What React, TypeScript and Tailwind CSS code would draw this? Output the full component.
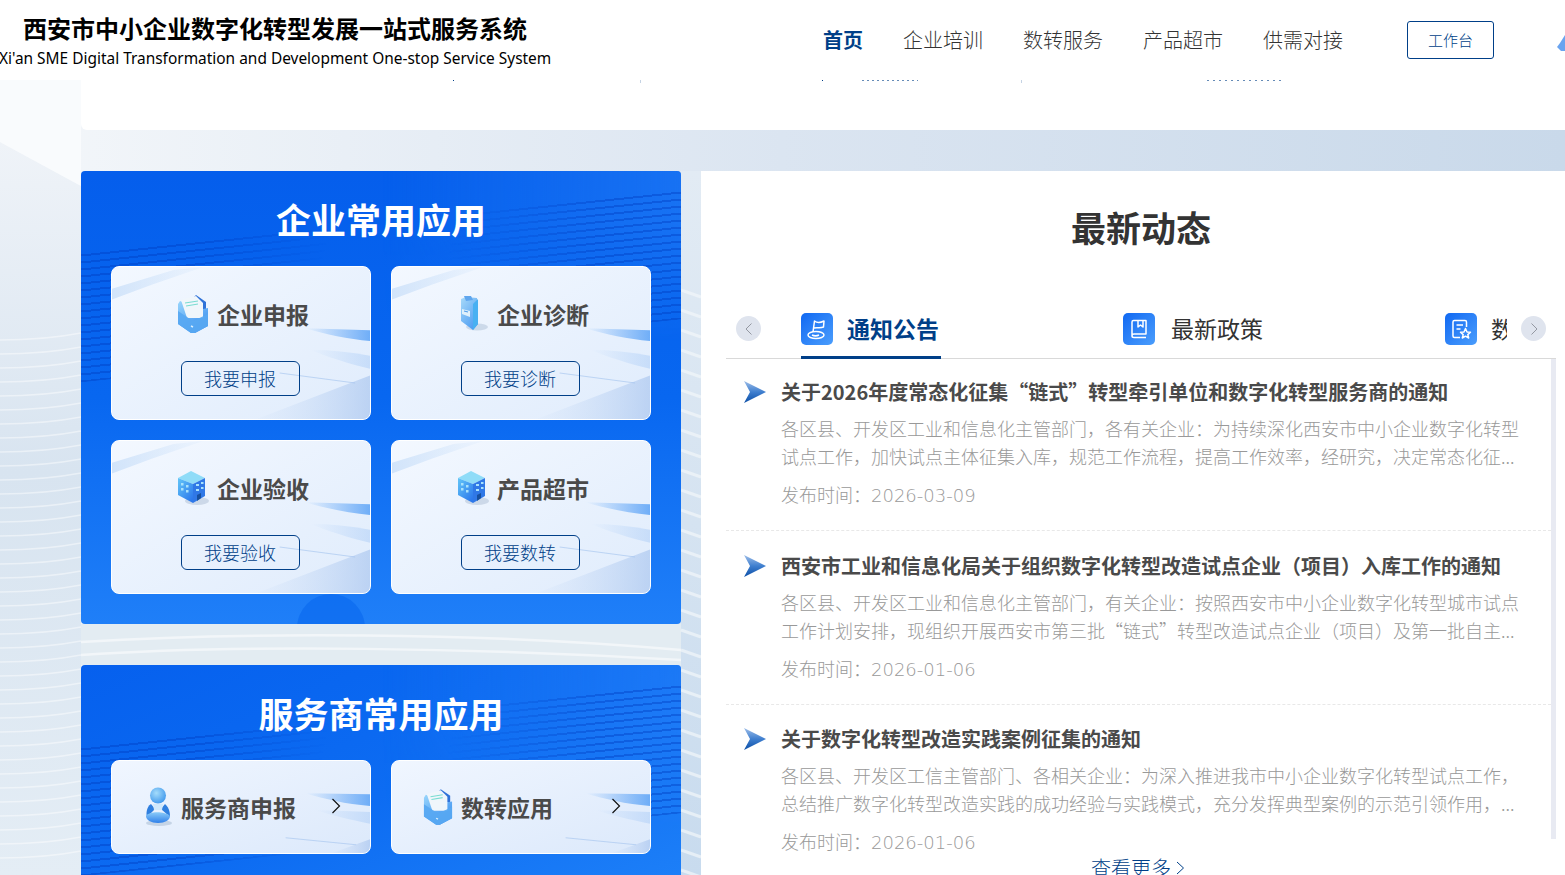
import React from "react";

const CJK = "font-['Noto_Sans_CJK_SC','Noto_Sans',sans-serif]";

function Envelope({ size = 32, id }: { size?: number; id: string }) {
  return (
    <svg width={size} height={Math.round(size * 1.25)} viewBox="0 0 32 40">
      <defs>
        <linearGradient id={id} x1="0" y1="0" x2="0.6" y2="1">
          <stop offset="0" stopColor="#9ad6fc" />
          <stop offset="1" stopColor="#3a8ff0" />
        </linearGradient>
      </defs>
      <path d="M19 1 L29 8 L29 16 L10 10 Z" fill="#2f72d8" />
      <path d="M1 10 L3 7 L26 15 L31 14 L31 32 L18 39 L14 39 L1 30 Z" fill={`url(#${id})`} />
      <path d="M4 6 L19 2 L26 9 L26 24 L10 24 Z" fill="#f0f6fb" />
      <path d="M8 9 L21 7 M9 12 L21 10" stroke="#7adcd2" strokeWidth="1.2" />
      <path d="M1 17 L16 27 L31 20 L31 32 L18 39 L14 39 L1 30 Z" fill="#58a8f2" opacity="0.92" />
      <path d="M14 32 l2 1" stroke="#d8effe" strokeWidth="1.4" />
    </svg>
  );
}

function Clipboard() {
  return (
    <svg width="30" height="36" viewBox="0 0 30 36">
      <defs>
        <linearGradient id="clipg" x1="0" y1="0" x2="0.7" y2="1">
          <stop offset="0" stopColor="#a8daf9" />
          <stop offset="1" stopColor="#4d9cf2" />
        </linearGradient>
      </defs>
      <ellipse cx="19" cy="31" rx="11" ry="3.5" fill="#b8c8dc" opacity="0.6" />
      <path d="M3 3 L8 1 L19 2 L20 28 L15 34 L3 25 Z" fill="url(#clipg)" />
      <path d="M15 8 L20 3 L20 28 L15 34 Z" fill="#48b0f2" />
      <path d="M6 0 L13 0 L15 4 L8 5 Z" fill="#5fa6ee" />
      <path d="M4 13 L12 15 L12 21 L4 18 Z" fill="#dff0fb" />
      <path d="M6 15 L10 16" stroke="#4f9bea" strokeWidth="1.2" />
    </svg>
  );
}

function Building({ id }: { id: string }) {
  return (
    <svg width="32" height="36" viewBox="0 0 32 36">
      <defs>
        <linearGradient id={id} x1="0" y1="0" x2="0.8" y2="1">
          <stop offset="0" stopColor="#63c6f8" />
          <stop offset="1" stopColor="#2c78ec" />
        </linearGradient>
      </defs>
      <ellipse cx="20" cy="31" rx="12" ry="4" fill="#b8c6da" opacity="0.6" />
      <path d="M14 1 L28 8 L16 14 L1 8 Z" fill="#8fdcf8" />
      <path d="M1 8 L16 14 L16 33 L1 25 Z" fill={`url(#${id})`} />
      <path d="M16 14 L28 8 L28 26 L16 33 Z" fill="#3078e6" />
      <g fill="#a9e2fb">
        <rect x="4" y="13" width="2.5" height="2.5" />
        <rect x="9" y="15" width="2.5" height="2.5" />
        <rect x="4" y="18" width="2.5" height="2.5" />
        <rect x="9" y="20" width="2.5" height="2.5" />
        <rect x="19" y="14" width="3" height="2" />
        <rect x="24" y="12" width="2.5" height="2" />
        <rect x="19" y="19" width="3" height="2" />
        <rect x="24" y="17" width="2.5" height="2" />
      </g>
      <path d="M20 25 L24 23 L24 28 L20 31 Z" fill="#17509f" />
    </svg>
  );
}

function Person() {
  return (
    <svg width="30" height="40" viewBox="0 0 30 40">
      <defs>
        <radialGradient id="pg" cx="0.4" cy="0.35" r="0.7">
          <stop offset="0" stopColor="#a4dcfb" />
          <stop offset="1" stopColor="#3f97ec" />
        </radialGradient>
        <linearGradient id="pb" x1="0" y1="0" x2="0" y2="1">
          <stop offset="0" stopColor="#8bcbf8" />
          <stop offset="1" stopColor="#2f80ea" />
        </linearGradient>
      </defs>
      <ellipse cx="16" cy="36" rx="13" ry="3" fill="#b7c7dc" opacity="0.7" />
      <circle cx="15" cy="8.5" r="8" fill="url(#pg)" />
      <path d="M8 17 C3 20 3 28 4 30 L12 22 Z" fill="#2f7fdf" />
      <path d="M22 17 C27 21 27 28 27 30 L18 22 Z" fill="#2f7fdf" />
      <path d="M10 17 L20 17 L19 23 L11 23 Z" fill="#cfe8fb" />
      <path d="M3 29 C6 24 22 24 27 29 C27 33 22 36 15 36 C8 36 3 33 3 29 Z" fill="url(#pb)" />
    </svg>
  );
}

function Gradients() {
  return (
    <svg width="0" height="0" className="absolute">
      <defs>
        <linearGradient id="streak" x1="0" y1="0" x2="1" y2="0">
          <stop offset="0" stopColor="#3d92f5" stopOpacity="0" />
          <stop offset="1" stopColor="#3d92f5" stopOpacity="0.7" />
        </linearGradient>
        <linearGradient id="streak2" x1="0" y1="0" x2="1" y2="0">
          <stop offset="0" stopColor="#9cc3f5" stopOpacity="0" />
          <stop offset="1" stopColor="#9cc3f5" stopOpacity="0.4" />
        </linearGradient>
        <linearGradient id="band" x1="0" y1="0" x2="1" y2="0">
          <stop offset="0" stopColor="#c4dcf8" stopOpacity="0.7" />
          <stop offset="1" stopColor="#c4dcf8" stopOpacity="0.1" />
        </linearGradient>
        <linearGradient id="floor" x1="0" y1="0" x2="1" y2="0">
          <stop offset="0" stopColor="#bdd3f2" stopOpacity="0.05" />
          <stop offset="1" stopColor="#96b8ea" stopOpacity="0.5" />
        </linearGradient>
        <linearGradient id="leftBg" x1="0" y1="0" x2="0" y2="1">
          <stop offset="0" stopColor="#eff3f8" />
          <stop offset="0.45" stopColor="#d8e4f0" />
          <stop offset="1" stopColor="#e4edf5" />
        </linearGradient>
        <linearGradient id="gutterBg" x1="0" y1="0" x2="0" y2="1">
          <stop offset="0" stopColor="#e2ebf4" />
          <stop offset="1" stopColor="#c8dbee" />
        </linearGradient>
        <linearGradient id="na" x1="0" y1="0" x2="0" y2="1">
          <stop offset="0" stopColor="#9dbde8" />
          <stop offset="0.5" stopColor="#3f7fcf" />
          <stop offset="1" stopColor="#0b4ea6" />
        </linearGradient>
      </defs>
    </svg>
  );
}

function CardDecor({ small = false }: { small?: boolean }) {
  return (
    <svg
      className="absolute inset-0 w-full h-full pointer-events-none"
      viewBox={small ? "0 0 260 94" : "0 0 260 154"}
      preserveAspectRatio="none"
    >
      {small ? (
        <>
          <path d="M195 33 L260 34 L260 46 C235 44 215 39 195 33 Z" fill="url(#streak)" />
          <path d="M205 50 L260 52 L260 64 C240 60 220 55 205 50 Z" fill="url(#streak2)" />
          <path d="M175 78 L246 85 L246 86 L175 79 Z" fill="#a9c8f0" opacity="0.7" />
          <path d="M222 94 L260 80 L260 94 Z" fill="url(#floor)" />
        </>
      ) : (
        <>
          <path d="M0 22 L62 3 L92 0 L40 18 L0 33 Z" fill="url(#band)" />
          <path d="M195 62 L260 64 L260 75 C238 73 215 68 195 62 Z" fill="url(#streak)" />
          <path d="M200 84 C220 84 240 86 260 90 L260 103 C238 98 218 91 200 84 Z" fill="url(#streak2)" />
          <path d="M169 107 L245 117 L245 118 L169 108 Z" fill="#a9c8f0" opacity="0.7" />
          <path d="M146 154 L260 110 L260 154 Z" fill="url(#floor)" />
        </>
      )}
    </svg>
  );
}

function AppCard({ icon, title, action }: { icon: React.ReactNode; title: string; action: string }) {
  return (
    <div className="relative w-[260px] h-[154px] rounded-lg border border-white overflow-hidden bg-gradient-to-br from-[#f3f8ff] to-[#e0ecfc]">
      <CardDecor />
      <div className="relative flex flex-col items-center pt-[27px]">
        <div className="flex items-center h-[40px] gap-[7px] pl-[3px]">
          <div className="flex items-center justify-center w-[34px] h-[40px] shrink-0">{icon}</div>
          <span className="text-[23px] leading-[40px] font-bold text-[#4a4a4a]">{title}</span>
        </div>
        <div className="mt-[27px] mr-[2px] w-[119px] h-[35px] rounded-md border border-[#003f88] flex items-center justify-center text-[18px] text-[#003f88] font-light">
          {action}
        </div>
      </div>
    </div>
  );
}

function ServiceCard({ icon, title }: { icon: React.ReactNode; title: string }) {
  return (
    <div className="relative w-[260px] h-[94px] rounded-lg border border-white overflow-hidden bg-gradient-to-br from-[#f0f6ff] to-[#dce9fb] flex items-center pl-[29px]">
      <CardDecor small />
      <div className="relative flex items-center justify-center w-[34px] h-[42px] shrink-0">{icon}</div>
      <span className="relative ml-[6px] text-[23px] font-bold text-[#4a4a4a] flex-1">{title}</span>
      <svg className="relative mr-[29px] mb-[3px]" width="10" height="16" viewBox="0 0 10 16">
        <path d="M1.5 1 L8.5 8 L1.5 15" stroke="#111" strokeWidth="1.2" fill="none" />
      </svg>
    </div>
  );
}

function Panel({ title, children, className }: { title: string; children: React.ReactNode; className: string }) {
  return (
    <div className={`relative w-[600px] rounded-sm overflow-hidden ${className}`}>
      <div className="absolute inset-x-0 top-0 h-[170px] bg-gradient-to-r from-transparent via-transparent to-[#2a85fa] opacity-50 [mask-image:linear-gradient(180deg,#000_30%,transparent_100%)]" />
      <div className="absolute inset-x-0 top-[50px] h-[130px] -skew-y-6 opacity-40 bg-[repeating-linear-gradient(0deg,#003cc0_0px,#003cc0_2px,transparent_2px,transparent_7px)] [mask-image:linear-gradient(100deg,#000_0%,#000_18%,transparent_40%,transparent_60%,#000_85%)]" />
      <div className="relative">
        <h2 className="pt-[20px] pb-[2px] text-center text-[35px] leading-[56px] font-bold text-white">{title}</h2>
        {children}
      </div>
    </div>
  );
}

function TabIcon({ children }: { children: React.ReactNode }) {
  return (
    <div className="w-[32px] h-[32px] rounded-[5px] bg-gradient-to-br from-[#0f68f2] to-[#4a9dfc] flex items-center justify-center shrink-0">
      {children}
    </div>
  );
}

function NavArrow({ dir }: { dir: "l" | "r" }) {
  return (
    <div className="w-[25px] h-[25px] rounded-full bg-[#dfe4ee] flex items-center justify-center shrink-0">
      <svg width="8" height="12" viewBox="0 0 8 12">
        <path d={dir === "l" ? "M6.5 0.5 L1 6 L6.5 11.5" : "M1.5 0.5 L7 6 L1.5 11.5"} stroke="#8b8f98" strokeWidth="0.9" fill="none" />
      </svg>
    </div>
  );
}

function NewsArrow() {
  return (
    <svg width="22" height="22" viewBox="0 0 22 22" className="shrink-0">
      <path d="M0 0 L22 11 L0 22 L6 11 Z" fill="url(#na)" />
    </svg>
  );
}

const news = [
  {
    t: "关于2026年度常态化征集“链式”转型牵引单位和数字化转型服务商的通知",
    d: "各区县、开发区工业和信息化主管部门，各有关企业：为持续深化西安市中小企业数字化转型试点工作，加快试点主体征集入库，规范工作流程，提高工作效率，经研究，决定常态化征...",
    date: "发布时间：2026-03-09",
    item: "h-[172px] pt-[17px] border-b border-dashed border-[#e8e8e8]",
  },
  {
    t: "西安市工业和信息化局关于组织数字化转型改造试点企业（项目）入库工作的通知",
    d: "各区县、开发区工业和信息化主管部门，有关企业：按照西安市中小企业数字化转型城市试点工作计划安排，现组织开展西安市第三批“链式”转型改造试点企业（项目）及第一批自主...",
    date: "发布时间：2026-01-06",
    item: "h-[174px] pt-[19px] border-b border-dashed border-[#e8e8e8]",
  },
  {
    t: "关于数字化转型改造实践案例征集的通知",
    d: "各区县、开发区工信主管部门、各相关企业：为深入推进我市中小企业数字化转型试点工作，总结推广数字化转型改造实践的成功经验与实践模式，充分发挥典型案例的示范引领作用，...",
    date: "发布时间：2026-01-06",
    item: "h-[174px] pt-[18px]",
  },
];

const leftLines = Array.from({ length: 38 }, (_, i) => 340 + i * 14);
const gutterLines = Array.from({ length: 30 }, (_, i) => 290 + i * 20);

export default function App() {
  return (
    <div className={`relative w-[1565px] h-[875px] overflow-hidden bg-gradient-to-r from-[#f4f7fa] via-[#dbe5f1] to-[#c9d9ea] ${CJK}`}>
      <Gradients />
      {/* background sheen */}
      <svg className="absolute inset-0 w-full h-full pointer-events-none" viewBox="0 0 1565 875" preserveAspectRatio="none">
        <path d="M0 142 L81 186 L81 875 L0 875 Z" fill="url(#leftBg)" />
        <path d="M0 80 L81 80 L81 186 L0 142 Z" fill="#f9fbfd" />
        <rect x="81" y="624" width="600" height="41" fill="#e3ecf2" />
        <rect x="681" y="171" width="20" height="704" fill="url(#gutterBg)" />
        {leftLines.map((y) => (
          <path key={y} d={`M0 ${y} C30 ${y} 60 ${y - 3} 81 ${y - 7}`} stroke="#fff" strokeOpacity="0.45" strokeWidth="1.6" fill="none" />
        ))}
        <path d="M81 642 C240 632 480 632 681 650 M81 655 C240 644 480 648 681 660" stroke="#f2f6f9" strokeWidth="2.5" fill="none" />
        {gutterLines.map((y) => (
          <path key={y} d={`M681 ${y} L701 ${y + 7}`} stroke="#f2f6fa" strokeOpacity="0.7" strokeWidth="3" fill="none" />
        ))}
      </svg>

      {/* header */}
      <header className="relative z-10 h-[80px] bg-white flex">
        <div className="w-[560px] shrink-0 relative">
          <h1 className="absolute left-[23px] top-[11px] text-[24px] leading-[34px] font-bold text-black whitespace-nowrap">
            西安市中小企业数字化转型发展一站式服务系统
          </h1>
          <p className="absolute left-[-1px] top-[47px] text-[15.45px] leading-[22px] text-black whitespace-nowrap font-['Noto_Sans',sans-serif]">
            Xi'an SME Digital Transformation and Development One-stop Service System
          </p>
        </div>
        <nav className="ml-[263px] flex items-center gap-[40px] h-[80px] pb-[1px] text-[20px] text-[#333] whitespace-nowrap font-light">
          <a className="font-bold text-[#003f88]">首页</a>
          <a>企业培训</a>
          <a>数转服务</a>
          <a>产品超市</a>
          <a>供需对接</a>
        </nav>
        <div className="ml-[64px] mt-[21px] w-[87px] h-[38px] rounded-[3px] border border-[#003f88] flex items-center justify-center text-[15px] text-[#003f88] font-light">
          工作台
        </div>
        <svg className="absolute left-[1557px] top-[32px]" width="8" height="24" viewBox="0 0 8 24">
          <path d="M8 3 L3 11 L0 15 L4 19 L8 19 Z" fill="#6aa4f0" />
        </svg>
      </header>

      {/* remainder of the banner card, with the feet of text scrolled under the header */}
      <div className="relative ml-[81px] h-[50px] bg-white rounded-bl-md">
        <div className="absolute left-[372px] top-0 w-[1px] h-[1px] bg-[#003f88]" />
        <div className="absolute left-[559px] top-0 w-[1px] h-[3px] bg-[#c5d3e4]" />
        <div className="absolute left-[741px] top-0 w-[1px] h-[1px] bg-[#003f88]" />
        <div className="absolute left-[781px] top-0 w-[56px] h-[1px] opacity-60 bg-[repeating-linear-gradient(90deg,#003f88_0px,#003f88_2px,transparent_2px,transparent_5px)]" />
        <div className="absolute left-[940px] top-0 w-[1px] h-[3px] bg-[#c5d3e4]" />
        <div className="absolute left-[1126px] top-0 w-[78px] h-[1px] opacity-60 bg-[repeating-linear-gradient(90deg,#003f88_0px,#003f88_2px,transparent_2px,transparent_6px)]" />
      </div>

      {/* content */}
      <main className="relative mt-[41px] ml-[81px] flex gap-[20px] items-start">
        <div className="flex flex-col gap-[41px] w-[600px] shrink-0">
          <Panel title="企业常用应用" className="h-[453px] bg-gradient-to-b from-[#055eec] via-[#0867f0] to-[#1f7ff8]">
            <div className="mt-[17px] px-[30px] grid grid-cols-[260px_260px] gap-[20px]">
              <AppCard icon={<Envelope id="env1" />} title="企业申报" action="我要申报" />
              <AppCard icon={<Clipboard />} title="企业诊断" action="我要诊断" />
              <AppCard icon={<Building id="bd1" />} title="企业验收" action="我要验收" />
              <AppCard icon={<Building id="bd2" />} title="产品超市" action="我要数转" />
            </div>
            <div className="absolute left-[216px] top-[423px] w-[68px] h-[68px] rounded-full bg-[#0868ee] opacity-60" />
          </Panel>
          <Panel title="服务商常用应用" className="h-[260px] bg-gradient-to-br from-[#0660ee] via-[#0d6cf2] to-[#2083f9]">
            <div className="mt-[17px] px-[30px] flex gap-[20px]">
              <ServiceCard icon={<Person />} title="服务商申报" />
              <ServiceCard icon={<Envelope id="env2" size={30} />} title="数转应用" />
            </div>
          </Panel>
        </div>

        <section className="w-[864px] h-[720px] bg-white shrink-0 pl-[25px] pr-[9px]">
          <h2 className="mt-[31px] h-[50px] text-center text-[35px] leading-[50px] font-bold text-[#333]">最新动态</h2>

          <div className="mt-[61px] h-[46px] border-b border-[#d9d9d9] flex items-start relative">
            <div className="ml-[10px] mt-[3px]"><NavArrow dir="l" /></div>
            <div className="absolute left-[75px] top-0 h-[46px] w-[140px] border-b-[3px] border-[#003f88] flex gap-[14px]">
              <TabIcon>
                <svg width="24" height="24" viewBox="0 0 24 24" fill="none" stroke="#fff" strokeWidth="1.5" strokeLinejoin="round">
                  <path d="M8 15 L9.5 4 C12 6 15 6 19 4 L18.5 10 C15 11.5 12 10 9 11" />
                  <ellipse cx="11" cy="18" rx="8" ry="3.5" />
                  <path d="M7 18 C9 19 12 19 14 18" />
                </svg>
              </TabIcon>
              <span className="text-[23px] leading-[30px] font-bold text-[#003f88] whitespace-nowrap">通知公告</span>
            </div>
            <div className="absolute left-[397px] top-0 flex gap-[16px]">
              <TabIcon>
                <svg width="24" height="24" viewBox="0 0 24 24" fill="none" stroke="#fff" strokeWidth="1.5" strokeLinejoin="round">
                  <path d="M5 19 V5 C5 4 5.5 3.5 6.5 3.5 H19 V17 H7 C5.8 17 5 18 5 19 C5 20 5.8 20.5 7 20.5 H19" />
                  <path d="M11 4 V10 L13.5 8 L16 10 V4" />
                </svg>
              </TabIcon>
              <span className="text-[23px] leading-[30px] text-[#333] whitespace-nowrap font-normal">最新政策</span>
            </div>
            <div className="absolute left-[719px] top-0 flex gap-[14px]">
              <TabIcon>
                <svg width="24" height="24" viewBox="0 0 24 24" fill="none" stroke="#fff" strokeWidth="1.5" strokeLinejoin="round">
                  <path d="M11 20.5 H5.5 C4.5 20.5 4 20 4 19 V5 C4 4 4.5 3.5 5.5 3.5 H16 C17 3.5 17.5 4 17.5 5 V10" />
                  <path d="M7.5 8 H14 M7.5 12 H11.5" />
                  <path d="M16.5 11.5 L18 15 L21.5 15.3 L18.8 17.6 L19.7 21 L16.5 19.2 L13.3 21 L14.2 17.6 L11.5 15.3 L15 15 Z" />
                </svg>
              </TabIcon>
              <span className="text-[23px] leading-[30px] text-[#333] overflow-hidden w-[16px] whitespace-nowrap">数</span>
            </div>
            <div className="absolute left-[795px] top-[3px]"><NavArrow dir="r" /></div>
          </div>

          <div className="relative h-[480px] pr-[5px]">
            <div className="absolute right-0 top-0 w-[5px] h-[480px] bg-[#e8eaf2]" />
            {news.map((n, i) => (
              <article key={i} className={n.item}>
                <div className="flex items-center gap-[15px] pl-[18px] h-[32px]">
                  <NewsArrow />
                  <h3 className="text-[20px] leading-[32px] font-bold text-[#4a4a4a] whitespace-nowrap">{n.t}</h3>
                </div>
                <p className="ml-[55px] mt-[6px] w-[742px] text-[18px] leading-[28px] text-[#999] font-light">{n.d}</p>
                <p className="ml-[55px] mt-[10px] text-[18px] leading-[32px] text-[#999] font-light font-['DejaVu_Sans','Noto_Sans_CJK_SC',sans-serif]">
                  {n.date}
                </p>
              </article>
            ))}
          </div>
          <div className="relative mt-[15px] ml-[365px] text-[20px] leading-[28px] text-[#003f88] font-light flex items-center gap-[5px] whitespace-nowrap">
            查看更多
            <svg width="9" height="14" viewBox="0 0 9 14">
              <path d="M1 1 L7.5 7 L1 13" stroke="#003f88" strokeWidth="1" fill="none" />
            </svg>
          </div>
        </section>
      </main>
    </div>
  );
}
